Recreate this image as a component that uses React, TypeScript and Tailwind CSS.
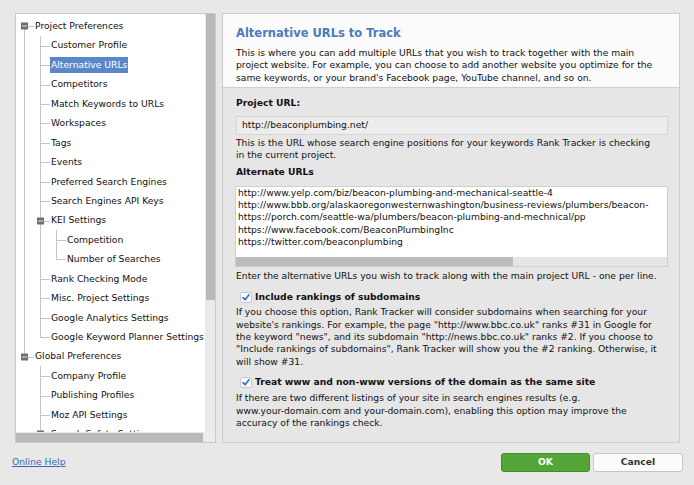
import React from 'react'

type Row = { t: string; lv: 0 | 1 | 2; box?: boolean; sel?: boolean }

const rows: Row[] = [
  { t: 'Project Preferences', lv: 0, box: true },
  { t: 'Customer Profile', lv: 1 },
  { t: 'Alternative URLs', lv: 1, sel: true },
  { t: 'Competitors', lv: 1 },
  { t: 'Match Keywords to URLs', lv: 1 },
  { t: 'Workspaces', lv: 1 },
  { t: 'Tags', lv: 1 },
  { t: 'Events', lv: 1 },
  { t: 'Preferred Search Engines', lv: 1 },
  { t: 'Search Engines API Keys', lv: 1 },
  { t: 'KEI Settings', lv: 1, box: true },
  { t: 'Competition', lv: 2 },
  { t: 'Number of Searches', lv: 2 },
  { t: 'Rank Checking Mode', lv: 1 },
  { t: 'Misc. Project Settings', lv: 1 },
  { t: 'Google Analytics Settings', lv: 1 },
  { t: 'Google Keyword Planner Settings', lv: 1 },
  { t: 'Global Preferences', lv: 0, box: true },
  { t: 'Company Profile', lv: 1 },
  { t: 'Publishing Profiles', lv: 1 },
  { t: 'Moz API Settings', lv: 1 },
  { t: 'Search Safety Settings', lv: 1, box: true },
]

type Seg = { x: string; k: 'f' | 't' | 'b' }

// vertical guide lines for each row of the tree
function guides(i: number): Seg[] {
  const s: Seg[] = []
  if (i === 0) s.push({ x: 'left-[8px]', k: 'b' })
  else if (i < 17) s.push({ x: 'left-[8px]', k: 'f' })
  else if (i === 17) s.push({ x: 'left-[8px]', k: 't' })
  if (i >= 1 && i <= 15) s.push({ x: 'left-[24px]', k: 'f' })
  if (i === 16) s.push({ x: 'left-[24px]', k: 't' })
  if (i >= 18) s.push({ x: 'left-[24px]', k: 'f' })
  if (i === 11) s.push({ x: 'left-[40px]', k: 'f' })
  if (i === 12) s.push({ x: 'left-[40px]', k: 't' })
  return s
}

const segCls = { f: 'top-0 bottom-0', t: 'top-0 h-1/2', b: 'top-1/2 bottom-0' }

function Box({ cls }: { cls: string }) {
  return (
    <span className={`absolute top-1/2 -translate-y-1/2 w-[7px] h-[7px] bg-[#6e6e6e] flex items-center justify-center ${cls}`}>
      <span className="w-[5px] h-px bg-[#e6e6e6]" />
    </span>
  )
}

function TreeRow({ r, i }: { r: Row; i: number }) {
  const pad = r.lv === 0 ? 'pl-[19px]' : r.lv === 1 ? 'pl-[35px]' : 'pl-[51px]'
  let hline = ''
  if (r.lv === 0) hline = 'left-[12px] w-[6px]'
  else if (r.lv === 1) hline = r.box ? 'left-[28px] w-[6px]' : 'left-[24px] w-[10px]'
  else hline = 'left-[40px] w-[10px]'
  return (
    <div className={`relative h-[19.45px] flex items-center whitespace-nowrap ${pad}`}>
      {guides(i).map((g, k) => (
        <span key={k} className={`absolute w-px bg-[#c6c6c6] ${g.x} ${segCls[g.k]}`} />
      ))}
      <span className={`absolute top-1/2 h-px bg-[#c6c6c6] ${hline}`} />
      {r.box && <Box cls={r.lv === 0 ? 'left-[5px]' : 'left-[21px]'} />}
      {r.sel ? (
        <span className="-ml-px px-px h-[16px] leading-[16px] bg-[#5a87c7] text-white">{r.t}</span>
      ) : (
        <span className="text-[#111]">{r.t}</span>
      )}
    </div>
  )
}

function Check() {
  return (
    <svg width="12" height="11" viewBox="0 0 12 11" className="shrink-0">
      <rect x="0.5" y="0.5" width="11" height="10" rx="2" fill="#fafafa" stroke="#c4c4c4" />
      <path d="M3 5.6 L5.1 7.8 L9 2.8" fill="none" stroke="#2e6bd0" strokeWidth="1.6" strokeLinecap="round" strokeLinejoin="round" />
    </svg>
  )
}

export default function App() {
  return (
    <div
      className="w-[694px] h-[485px] bg-[#e8e8e8] text-[9.2px] leading-[12.4px] text-[#111] overflow-hidden"
      style={{ fontFamily: '"DejaVu Sans", Verdana, sans-serif' }}
    >
      <div className="flex pt-[13px] pl-[15px]">
        {/* left tree */}
        <div className="w-[201px] h-[430px] border border-[#c9c9c9] bg-white grid grid-cols-[189px_10px] grid-rows-[418px_10px]">
          <div className="overflow-hidden pt-[2.5px]">
            {rows.map((r, i) => (
              <TreeRow key={r.t} r={r} i={i} />
            ))}
          </div>
          <div className="bg-[#e9e9e9] flex justify-center">
            <div className="w-[9px] h-[286px] bg-[#b9b9b9]" />
          </div>
          <div className="bg-[#e9e9e9] flex items-center">
            <div className="w-[187px] h-[9px] bg-[#b9b9b9]" />
          </div>
          <div className="bg-[#ececec]" />
        </div>

        {/* right settings */}
        <div className="ml-[6px] w-[458px] h-[430px] border border-[#cdcdcd] bg-[#e6e6e6] flex flex-col">
          <div className="bg-[#fbfbfb] border-b border-[#cfcfcf] pl-[13px] pt-[11px] pb-[3px]">
            <div className="text-[11.5px] leading-[16px] font-bold text-[#4a7bbf]">Alternative URLs to Track</div>
            <div className="mt-[6px] whitespace-nowrap">
              This is where you can add multiple URLs that you wish to track together with the main
              <br />
              project website. For example, you can choose to add another website you optimize for the
              <br />
              same keywords, or your brand's Facebook page, YouTube channel, and so on.
            </div>
          </div>

          <div className="pl-[13px] pr-[11px] pt-[9px] whitespace-nowrap">
            <div className="font-bold">Project URL:</div>
            <div className="mt-[6px] h-[19px] border border-[#d6d6d6] bg-[#ededed] flex items-center pl-[5px]">
              http://beaconplumbing.net/
            </div>
            <div className="mt-[2px]">
              This is the URL whose search engine positions for your keywords Rank Tracker is checking
              <br />
              in the current project.
            </div>
            <div className="mt-[5px] font-bold">Alternate URLs</div>
            <div className="mt-[7px] -ml-px h-[81px] border border-[#cfcfcf] bg-white flex flex-col">
              <div className="flex-1 overflow-hidden pl-[2px] leading-[12.3px]">
                http://www.yelp.com/biz/beacon-plumbing-and-mechanical-seattle-4
                <br />
                http://www.bbb.org/alaskaoregonwesternwashington/business-reviews/plumbers/beacon-
                <br />
                https://porch.com/seattle-wa/plumbers/beacon-plumbing-and-mechnical/pp
                <br />
                https://www.facebook.com/BeaconPlumbingInc
                <br />
                https://twitter.com/beaconplumbing
              </div>
              <div className="h-[9px] bg-[#e6e6e6] flex">
                <div className="w-[277px] bg-[#bcbcbc]" />
              </div>
            </div>
            <div className="mt-[3px]">
              Enter the alternative URLs you wish to track along with the main project URL - one per line.
            </div>

            <div className="mt-[8px] h-[14px] flex items-center gap-[3px] pl-[4px]">
              <Check />
              <span className="font-bold">Include rankings of subdomains</span>
            </div>
            <div className="mt-[2px]">
              If you choose this option, Rank Tracker will consider subdomains when searching for your
              <br />
              website's rankings. For example, the page "http://www.bbc.co.uk" ranks #31 in Google for
              <br />
              the keyword "news", and its subdomain "http://news.bbc.co.uk" ranks #2. If you choose to
              <br />
              "Include rankings of subdomains", Rank Tracker will show you the #2 ranking. Otherwise, it
              <br />
              will show #31.
            </div>

            <div className="mt-[7px] h-[14px] flex items-center gap-[3px] pl-[4px]">
              <Check />
              <span className="font-bold">Treat www and non-www versions of the domain as the same site</span>
            </div>
            <div className="mt-[3px]">
              If there are two different listings of your site in search engines results (e.g.
              <br />
              www.your-domain.com and your-domain.com), enabling this option may improve the
              <br />
              accuracy of the rankings check.
            </div>
          </div>
        </div>
      </div>

      {/* bottom bar */}
      <div className="mt-[10px] pl-[12px] pr-[11px] h-[19px] flex items-center justify-between">
        <a className="text-[#3569b5] underline">Online Help</a>
        <div className="flex gap-[3px]">
          <button className="w-[89px] h-[19px] rounded-[3px] border border-[#3f8f2a] bg-[#55a539] text-white font-bold">
            OK
          </button>
          <button className="w-[90px] h-[19px] rounded-[3px] border border-[#c7c7c7] bg-[#fbfbfb] text-[#333] font-bold">
            Cancel
          </button>
        </div>
      </div>
    </div>
  )
}
